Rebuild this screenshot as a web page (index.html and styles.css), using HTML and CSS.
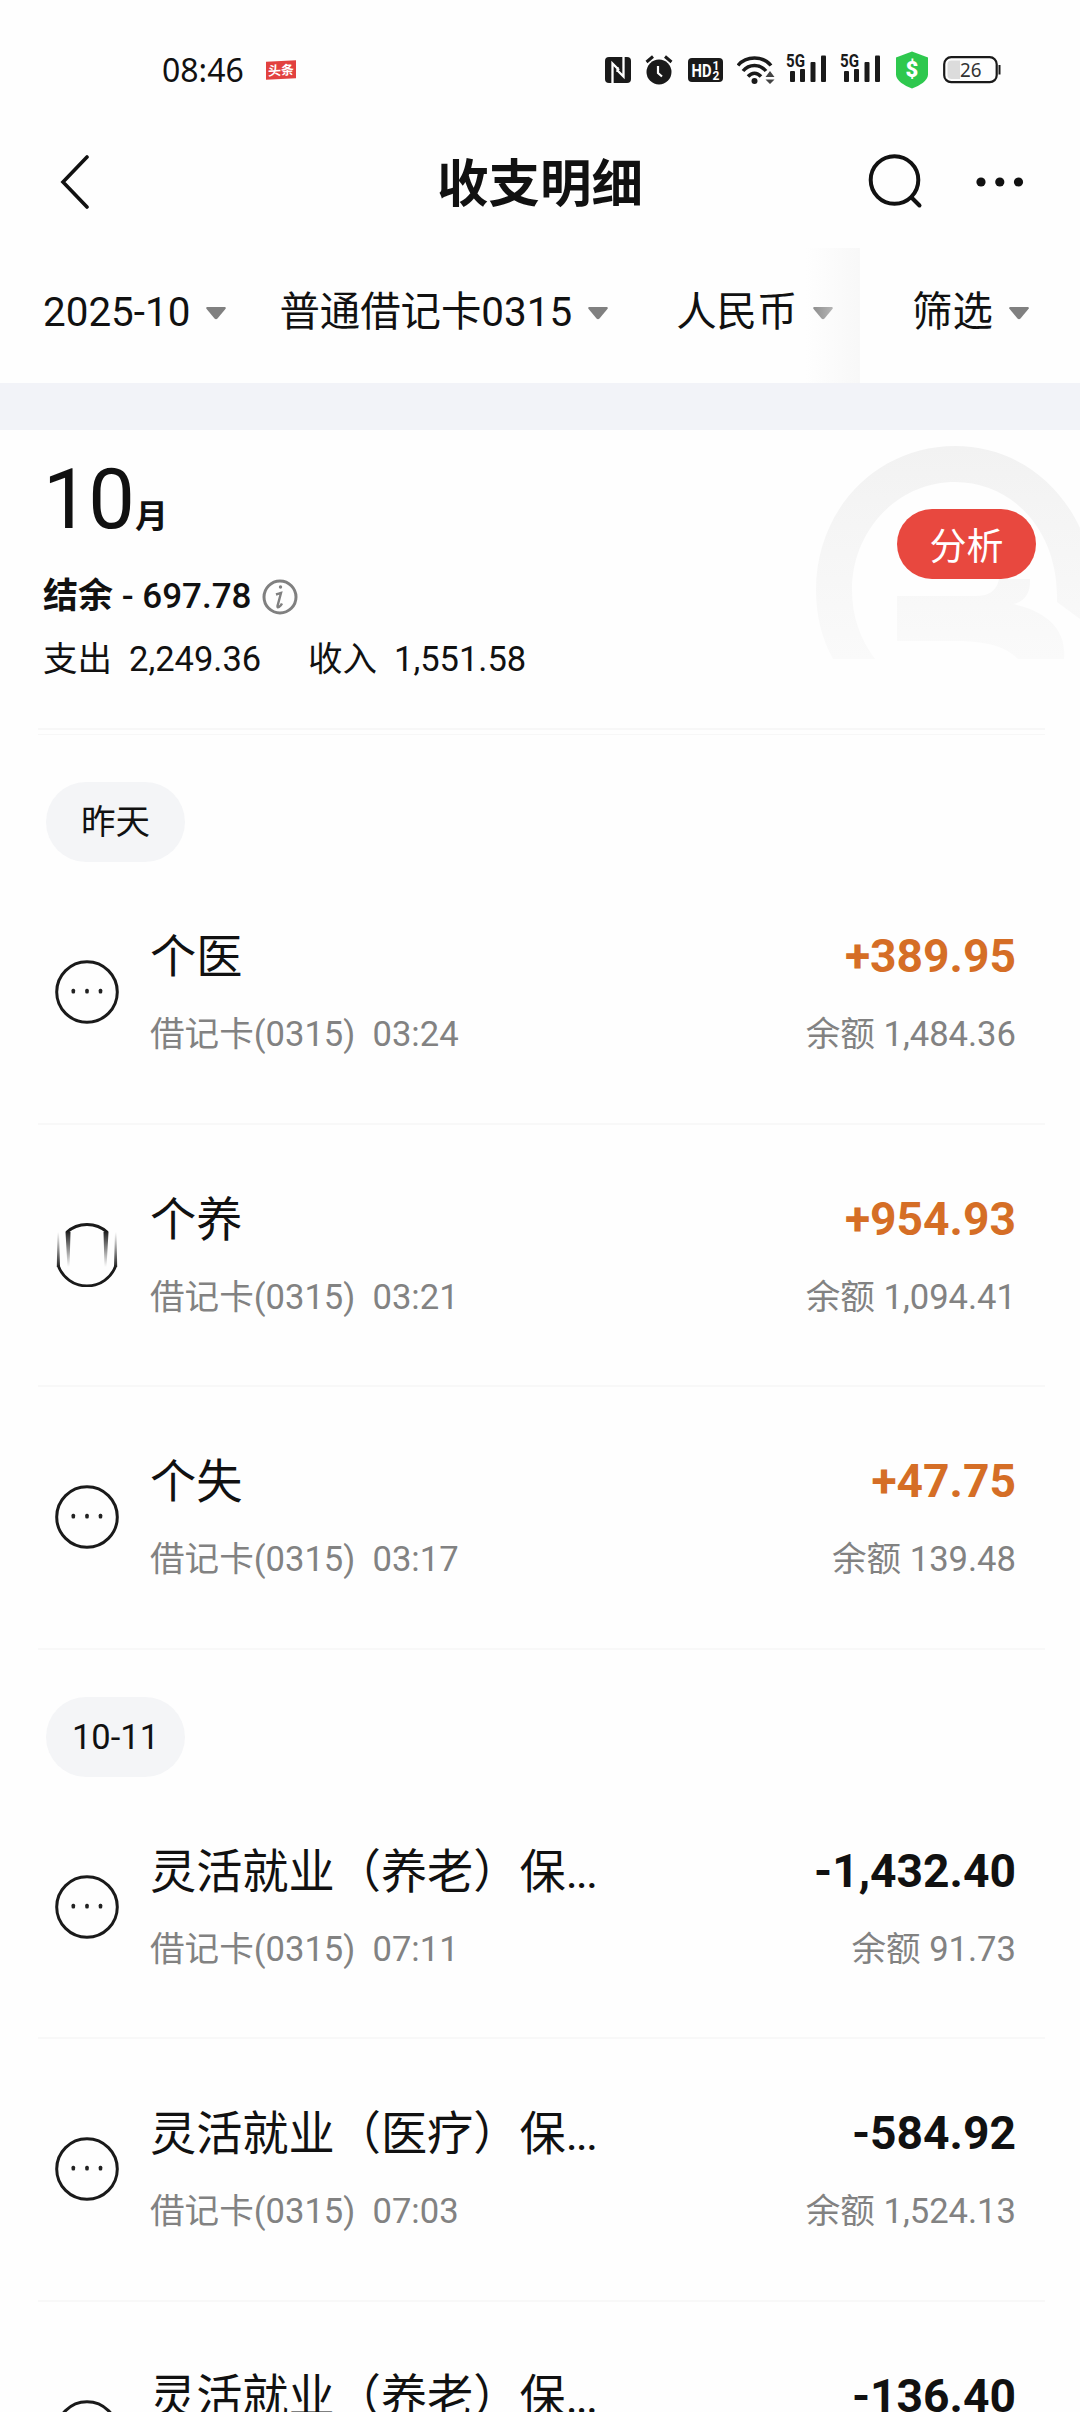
FILE: index.html
```html
<!DOCTYPE html>
<html lang="zh-CN">
<head>
<meta charset="utf-8">
<title>收支明细</title>
<link rel="stylesheet" href="styles.css">
</head>
<body>
<svg class="defs" width="0" height="0">
  <defs>
    <symbol id="caret" viewBox="0 0 22 14"><path d="M2 1h18q1.500 .5 .6 1.800L12.500 12.500q-1.500 1.500-3 0L1.400 2.800Q.5 1.500 2 1z" fill="#808080"/></symbol>
    <symbol id="more" viewBox="0 0 64 64">
      <circle cx="32" cy="32" r="30.300" fill="none" stroke="#1a1a1a" stroke-width="3"/>
      <g fill="#222"><rect x="16.500" y="28.800" width="3.600" height="4.600" rx="1.500"/><rect x="30.200" y="28.800" width="3.600" height="4.600" rx="1.500"/><rect x="43.700" y="28.800" width="3.600" height="4.600" rx="1.500"/></g>
    </symbol>
    <symbol id="signal" viewBox="0 0 42 32">
      <text x="0" y="13" font-family="Roboto, sans-serif" font-weight="700" font-size="18.500" textLength="19" lengthAdjust="spacingAndGlyphs" fill="#1a1a1a">5G</text>
      <g fill="#1a1a1a"><rect x="4" y="17" width="5" height="11" rx="1"/><rect x="14" y="15" width="5" height="13" rx="1"/><rect x="24.500" y="8" width="5" height="20" rx="1"/><rect x="35" y="1.500" width="5" height="26.500" rx="1"/></g>
    </symbol>
  </defs>
</svg>
<header class="status">
  <span class="clock">08:46</span>
  <span class="news">头条</span>
  <div class="status-icons">
    <svg class="nfc" width="26" height="26" viewBox="0 0 26 26"><rect width="26" height="26" rx="4" fill="#1a1a1a"/><path d="M7.500 26V6.500L14 13M18.500 0V19.500L12 13M12.500 10v5" fill="none" stroke="#fff" stroke-width="2.300"/></svg>
    <svg class="alarm" width="28" height="30" viewBox="0 0 28 30"><circle cx="14" cy="17" r="12.500" fill="#1a1a1a"/><path d="M1.500 7L8 1.500M20 1.500L26.500 7" stroke="#1a1a1a" stroke-width="3"/><path d="M13 11v7l4 3.500" fill="none" stroke="#fff" stroke-width="2.200"/></svg>
    <svg class="hd" width="35" height="24" viewBox="0 0 35 24"><rect width="35" height="24" rx="4" fill="#1a1a1a"/><g fill="#fff" font-family="Roboto, sans-serif" font-weight="700"><text x="3.500" y="18.500" font-size="18" textLength="20" lengthAdjust="spacingAndGlyphs">HD</text><text x="24.500" y="11.500" font-size="12">1</text><text x="24.500" y="21.500" font-size="12">2</text></g></svg>
    <svg class="wifi" width="40" height="30" viewBox="0 0 40 30"><g fill="none" stroke="#1a1a1a" stroke-width="3.500"><path d="M1 10.500C9 .5 26 .5 34 10.500"/><path d="M6 16c6-7.500 17-7.500 23 0"/><path d="M11 21.500c4-4.500 9-4.500 13 0"/></g><circle cx="17.500" cy="26" r="3" fill="#1a1a1a"/><path d="M28.500 22l4.500-6 4.500 6zM28.500 24.500h9l-4.500 4.500z" fill="#444"/></svg>
    <svg class="sig" width="42" height="32"><use href="#signal"/></svg>
    <svg class="sig" width="42" height="32"><use href="#signal"/></svg>
    <svg class="shield" width="34" height="38" viewBox="0 0 34 38"><path d="M17 .5l16 6v17c0 6-8 11-16 14C9 34.500 1 29.500 1 23.500v-17z" fill="#2ec84e"/><text x="17" y="26" text-anchor="middle" font-family="Roboto, sans-serif" font-weight="900" font-size="22" fill="#fff">$</text></svg>
    <svg class="battery" width="58" height="28" viewBox="0 0 58 28"><rect x="1.200" y="1.200" width="52.500" height="25" rx="7" fill="none" stroke="#1a1a1a" stroke-width="2.200"/><path d="M8.500 4.500H17v18.500H8.500q-4 0-4-4v-10.500q0-4 4-4z" fill="#dcdcdc"/><rect x="55.500" y="9" width="2" height="9.500" fill="#1a1a1a"/><text x="17" y="20.700" font-family="Noto Sans, sans-serif" font-size="19.500" textLength="21.500" lengthAdjust="spacingAndGlyphs" fill="#333">26</text></svg>
  </div>
</header>
<nav class="titlebar">
  <svg class="back" width="30" height="54" viewBox="0 0 30 54"><path d="M27 2L3 27l24 25" fill="none" stroke="#111" stroke-width="3.600" stroke-linecap="round"/></svg>
  <h1 class="title">收支明细</h1>
  <div class="tools">
    <svg width="56" height="56" viewBox="0 0 56 56"><circle cx="26.500" cy="26" r="23.800" fill="none" stroke="#111" stroke-width="4"/><path d="M43.500 43.500l8 8" stroke="#111" stroke-width="4" stroke-linecap="round"/></svg>
    <svg width="50" height="12" viewBox="0 0 50 12"><g fill="#111"><circle cx="6" cy="6" r="4.600"/><circle cx="24.800" cy="6" r="4.600"/><circle cx="43.500" cy="6" r="4.600"/></g></svg>
  </div>
</nav>
<section class="filters">
  <div class="filter-scroll">
    <span class="filter f-month">2025-10<svg class="caret" width="22" height="14"><use href="#caret"/></svg></span>
    <span class="filter f-card">普通借记卡0315<svg class="caret" width="22" height="14"><use href="#caret"/></svg></span>
    <span class="filter f-cur">人民币<svg class="caret" width="22" height="14"><use href="#caret"/></svg></span>
    <i class="fade"></i>
  </div>
  <div class="filter-fixed"><span class="filter">筛选<svg class="caret" width="22" height="14"><use href="#caret"/></svg></span></div>
</section>
<div class="band"></div>
<section class="summary">
  <svg class="watermark" width="264" height="213" viewBox="0 0 264 213">
    <defs><linearGradient id="wm" gradientUnits="userSpaceOnUse" x1="0" y1="0" x2="0" y2="213"><stop offset="0" stop-color="#f2f2f2"/><stop offset="1" stop-color="#fafafa"/></linearGradient></defs>
    <path fill="url(#wm)" d="M17 213C6 193 0 170 0 144C0 62 62 0 139 0C192 0 240 30 264 82V173L241 156C243 84 196 36 139 36C82 36 36 84 36 144C36 170 44 193 59 213z"/>
    <path fill="url(#wm)" d="M81 150H160Q180 150 183 133H214Q215 154 197 158C230 165 251 183 248 213H202C187 197 160 195 137 195H81z"/>
  </svg>
  <div class="month"><span class="month-num">10</span><span class="month-unit">月</span></div>
  <div class="net"><span><b>结余</b> - 697.78</span><svg width="36" height="36" viewBox="0 0 36 36"><circle cx="18" cy="18" r="16" fill="none" stroke="#808080" stroke-width="3"/><circle cx="18.500" cy="8" r="1.700" fill="#808080"/><path d="M14 15.500q3-1 5-1.500l-3.500 13q-.3 2 1.500 1t3-3.500" fill="none" stroke="#808080" stroke-width="2.400"/></svg></div>
  <div class="flows"><span class="flow-label">支出</span><span class="flow-out">2,249.36</span><span class="flow-label">收入</span><span>1,551.58</span></div>
  <button class="analyse">分析</button>
</section>
<main>
  <section class="day">
    <span class="date">昨天</span>
    <article class="row"><svg class="icon" width="64" height="64"><use href="#more"/></svg><div class="what"><div class="name">个医</div><div class="meta">借记卡(0315)&nbsp; 03:24</div></div><div class="sum"><div class="amount income">+389.95</div><div class="meta">余额 1,484.36</div></div></article>
    <article class="row"><svg class="icon" width="64" height="64" viewBox="0 0 64 64">
      <defs>
        <linearGradient id="down" x1="0" y1="0" x2="0" y2="1"><stop offset="0" stop-color="#222"/><stop offset="1" stop-color="#222" stop-opacity="0"/></linearGradient>
        <linearGradient id="up" x1="0" y1="1" x2="0" y2="0"><stop offset="0" stop-color="#222"/><stop offset="1" stop-color="#222" stop-opacity="0"/></linearGradient>
      </defs>
      <path d="M11.400 9.500A30.500 30.500 0 0 1 52.600 9.500M3.200 42.500A30.500 30.500 0 0 0 60.800 42.500" fill="none" stroke="#1a1a1a" stroke-width="2.800"/>
      <path d="M10.500 9h5l-1 35h-2zM53.500 9h-5l1 35h2z" fill="url(#down)"/>
      <path d="M2.500 9h1.500l1 35H1.800zM61.500 9h-1.500l-1 35h3.200z" fill="url(#up)"/>
    </svg><div class="what"><div class="name">个养</div><div class="meta">借记卡(0315)&nbsp; 03:21</div></div><div class="sum"><div class="amount income">+954.93</div><div class="meta">余额 1,094.41</div></div></article>
    <article class="row"><svg class="icon" width="64" height="64"><use href="#more"/></svg><div class="what"><div class="name">个失</div><div class="meta">借记卡(0315)&nbsp; 03:17</div></div><div class="sum"><div class="amount income">+47.75</div><div class="meta">余额 139.48</div></div></article>
  </section>
  <section class="day">
    <span class="date">10-11</span>
    <article class="row"><svg class="icon" width="64" height="64"><use href="#more"/></svg><div class="what"><div class="name">灵活就业（养老）保<span class="dots">...</span></div><div class="meta">借记卡(0315)&nbsp; 07:11</div></div><div class="sum"><div class="amount">-1,432.40</div><div class="meta">余额 91.73</div></div></article>
    <article class="row"><svg class="icon" width="64" height="64"><use href="#more"/></svg><div class="what"><div class="name">灵活就业（医疗）保<span class="dots">...</span></div><div class="meta">借记卡(0315)&nbsp; 07:03</div></div><div class="sum"><div class="amount">-584.92</div><div class="meta">余额 1,524.13</div></div></article>
    <article class="row last"><svg class="icon" width="64" height="64"><use href="#more"/></svg><div class="what"><div class="name">灵活就业（养老）保<span class="dots">...</span></div></div><div class="sum"><div class="amount">-136.40</div></div></article>
  </section>
</main>
</body>
</html>
```
FILE: styles.css
```css
* { box-sizing: border-box; }
html { overflow: hidden; }
body {
  margin: 0;
  width: 1080px;
  height: 2412px;
  overflow: hidden;
  background: #fefefe;
  color: #111;
  font-family: Roboto, "Noto Sans CJK SC", sans-serif;
}
svg { display: block; flex: none; }
.defs { position: absolute; }

.status { display: flex; align-items: center; height: 140px; padding-left: 162px; }
.clock { width: 104px; font: 32px/42px "Noto Sans", sans-serif; }
.news {
  width: 30px;
  height: 18px;
  background: #e2413f;
  color: #fff;
  font: 700 13px/18px "Noto Sans CJK SC", sans-serif;
  text-align: center;
  transform: skewY(-3deg);
}
.status-icons { display: flex; align-items: center; margin-left: 309px; }
.alarm { margin-left: 14px; }
.hd { margin-left: 15px; }
.wifi { margin-left: 14px; }
.sig { margin-left: 9px; }
.sig + .sig { margin-left: 12px; }
.shield { margin-left: 13px; }
.battery { margin-left: 14px; }

.titlebar {
  display: grid;
  grid-template-columns: 1fr auto 1fr;
  align-items: center;
  height: 83px;
  padding: 0 55px 0 60px;
}
.title { margin: 0 2px 3px -3px; font: 700 51.500px/70px "Noto Sans CJK SC", sans-serif; }
.tools { display: flex; align-items: center; justify-content: flex-end; gap: 51px; }

.filters { display: flex; height: 160px; padding-top: 25px; font-size: 40.400px; }
.filter-scroll { position: relative; display: flex; width: 860px; padding: 40px 0 0 43px; overflow: hidden; }
.filter { display: flex; align-items: center; height: 50px; white-space: nowrap; line-height: 50px; }
.caret { margin-left: 15px; }
.f-card { margin-left: 52px; }
.f-cur { margin-left: 67px; }
.fade { position: absolute; right: 0; top: 0; width: 54px; height: 100%; background: linear-gradient(90deg, rgba(247, 247, 247, 0), rgba(247, 247, 247, .9)); }
.filter-fixed { flex: 1; padding: 40px 0 0 52px; }
.band { height: 47px; background: #f2f3f8; }

.summary {
  position: relative;
  height: 305px;
  padding: 25px 0 0 43px;
  display: flex;
  flex-direction: column;
}
.summary::after {
  content: "";
  position: absolute;
  left: 38px;
  right: 35px;
  bottom: 0;
  height: 4px;
  border: solid #f7f7f7;
  border-width: 2px 0 1px;
}
.watermark { position: absolute; left: 816px; top: 16px; }
.month { display: flex; align-items: baseline; height: 90px; line-height: 90px; }
.month-num { font-size: 83px; width: 92px; letter-spacing: -1.500px; }
.month-unit { font-size: 33px; font-weight: 700; }
.net { display: flex; align-items: center; gap: 10px; height: 44px; margin-top: 30px; font-size: 35px; font-weight: 500; line-height: 42px; padding-bottom: 1px; }
.flows { display: flex; height: 44px; margin-top: 18px; font-size: 34.500px; line-height: 44px; }
.flow-label { width: 86px; }
.flow-out { width: 179px; }
.analyse {
  position: absolute;
  left: 897px;
  top: 79px;
  width: 139px;
  height: 70px;
  padding: 0;
  border: 0;
  border-radius: 35px;
  background: #e8483f;
  color: #fff;
  font: 37px/68px "Noto Sans CJK SC", sans-serif;
}

.day { display: flex; flex-direction: column; padding-top: 47px; }
.date {
  width: 139px;
  height: 80px;
  margin-left: 46px;
  border-radius: 40px;
  background: #f4f5f7;
  font-size: 34.500px;
  line-height: 80px;
  text-align: center;
}
.row {
  display: flex;
  flex: none;
  height: 262.500px;
  margin: 0 35px 0 38px;
  padding: 64px 29px 0 17px;
  border-bottom: 2px solid #f8f8f8;
}
.last { height: auto; border: 0; }
.icon { margin-top: 34px; }
.what { margin-left: 31px; }
.sum { margin-left: auto; text-align: right; }
.name { font-size: 46.200px; line-height: 62px; margin-bottom: -2px; white-space: nowrap; }
.dots { letter-spacing: -2px; }
.amount { font-size: 46.200px; font-weight: 700; line-height: 60px; }
.income { color: #d56e26; }
.meta { margin-top: 26px; color: #828282; font-size: 34.600px; line-height: 44px; white-space: nowrap; }
```
